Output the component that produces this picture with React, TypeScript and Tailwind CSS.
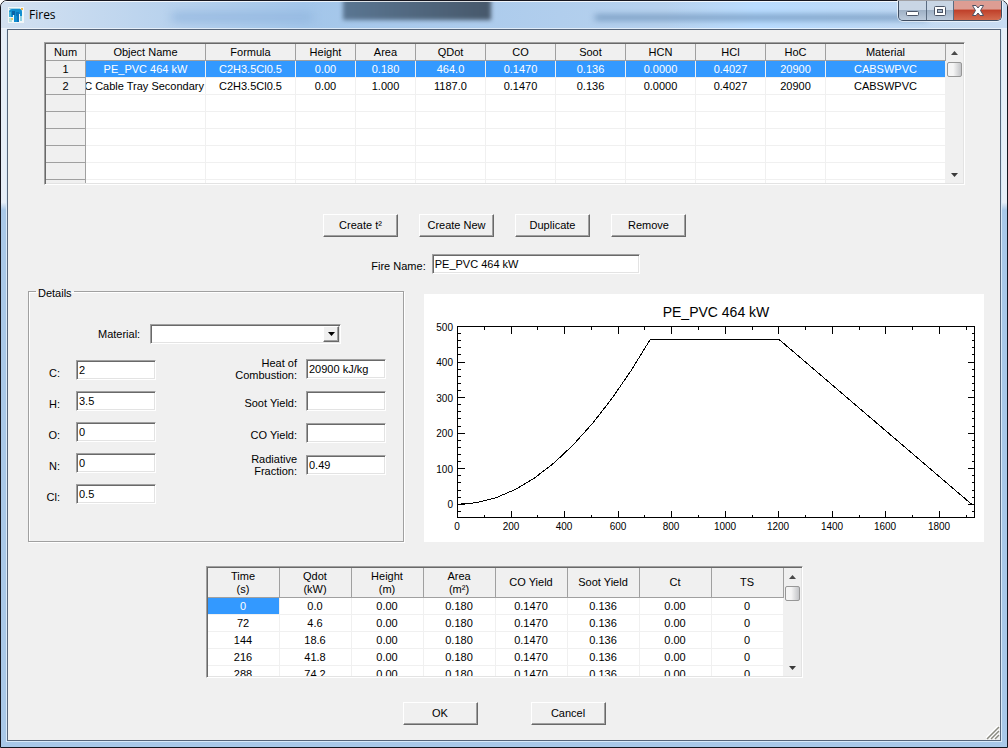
import { useId, useState } from "react";
import type { ReactNode } from "react";

const SUNKEN =
  "border border-t-[#a0a0a0] border-l-[#a0a0a0] border-r-white border-b-white shadow-[inset_1px_1px_0_#696969,inset_-1px_-1px_0_#e3e3e3]";
const RAISED =
  "border border-t-white border-l-white border-r-[#696969] border-b-[#696969] shadow-[inset_-1px_-1px_0_#a0a0a0]";

function PushButton({ children }: { children: ReactNode }) {
  return (
    <button
      type="button"
      className={`flex h-[23px] w-[75px] items-center justify-center whitespace-nowrap bg-[#f0f0f0] ${RAISED}`}
    >
      {children}
    </button>
  );
}

function ScrollBar({ label }: { label: string }) {
  return (
    <div className="flex w-[17px] shrink-0 flex-col items-center bg-[#f0f0f0]">
      <button
        type="button"
        aria-label={`Scroll ${label} up`}
        className="flex h-[17px] w-full items-center justify-center"
      >
        <svg width="7" height="4" viewBox="0 0 7 4" aria-hidden="true">
          <path d="M0 4L3.5 0L7 4Z" fill="#4a4a4a" />
        </svg>
      </button>
      <div className="mt-px h-[15px] w-[15px] rounded-[2px] border border-[#979797] bg-linear-to-r from-[#f5f5f5] from-40% to-[#c3c4c7]" />
      <div className="flex-1" />
      <button
        type="button"
        aria-label={`Scroll ${label} down`}
        className="flex h-[17px] w-full items-center justify-center"
      >
        <svg width="7" height="4" viewBox="0 0 7 4" aria-hidden="true">
          <path d="M0 0L3.5 4L7 0Z" fill="#3a3a3a" />
        </svg>
      </button>
    </div>
  );
}

const fireColumns = [
  { name: "Num", width: 40 },
  { name: "Object Name", width: 120 },
  { name: "Formula", width: 90 },
  { name: "Height", width: 60 },
  { name: "Area", width: 60 },
  { name: "QDot", width: 70 },
  { name: "CO", width: 70 },
  { name: "Soot", width: 70 },
  { name: "HCN", width: 70 },
  { name: "HCl", width: 70 },
  { name: "HoC", width: 60 },
  { name: "Material", width: 120 },
];

const fireRows: string[][] = [
  ["1", "PE_PVC 464 kW", "C2H3.5Cl0.5", "0.00", "0.180", "464.0", "0.1470", "0.136", "0.0000", "0.4027", "20900", "CABSWPVC"],
  ["2", "C Cable Tray Secondary", "C2H3.5Cl0.5", "0.00", "1.000", "1187.0", "0.1470", "0.136", "0.0000", "0.4027", "20900", "CABSWPVC"],
  ...Array.from({ length: 6 }, () => Array.from({ length: 12 }, () => "")),
];

const HEAD_CELL = "border-r border-b border-[#a0a0a0] bg-[#f0f0f0] p-0 font-normal";
const BODY_CELL = "h-[17px] overflow-hidden border-r border-b border-[#f0f0f0] p-0 whitespace-nowrap";

function FireTable() {
  return (
    <div className={`flex h-[143px] overflow-hidden bg-white p-px ${SUNKEN}`}>
      <div className="min-w-0 flex-1 overflow-hidden">
        <table className="w-full table-fixed border-separate border-spacing-0 text-center leading-4">
          <colgroup>
            {fireColumns.map((c) => (
              <col key={c.name} style={{ width: `${c.width / 9}%` }} />
            ))}
          </colgroup>
          <thead>
            <tr>
              {fireColumns.map((c) => (
                <th key={c.name} scope="col" className={`h-[17px] ${HEAD_CELL}`}>
                  {c.name}
                </th>
              ))}
            </tr>
          </thead>
          <tbody>
            {fireRows.map((row, r) => (
              <tr key={r} className={r === 0 ? "bg-[#3399ff] text-white" : "bg-white"}>
                {row.map((cell, c) =>
                  c === 0 ? (
                    <th key={c} scope="row" className={`h-[17px] text-black ${HEAD_CELL}`}>
                      {cell}
                    </th>
                  ) : (
                    <td key={c} className={BODY_CELL}>
                      {cell.length > 20 ? (
                        <div className="flex justify-end overflow-hidden pr-px">
                          <span>{cell}</span>
                        </div>
                      ) : (
                        cell
                      )}
                    </td>
                  ),
                )}
              </tr>
            ))}
          </tbody>
        </table>
      </div>
      <ScrollBar label="fires" />
    </div>
  );
}

const curveColumns: [string, string?][] = [
  ["Time", "(s)"],
  ["Qdot", "(kW)"],
  ["Height", "(m)"],
  ["Area", "(m²)"],
  ["CO Yield"],
  ["Soot Yield"],
  ["Ct"],
  ["TS"],
];

const curveRows = [
  ["0", "0.0"],
  ["72", "4.6"],
  ["144", "18.6"],
  ["216", "41.8"],
  ["288", "74.2"],
].map(([time, qdot]) => [time, qdot, "0.00", "0.180", "0.1470", "0.136", "0.00", "0"]);

function CurveTable() {
  return (
    <div className={`flex h-28 w-[597px] overflow-hidden bg-white p-px ${SUNKEN}`}>
      <div className="min-w-0 flex-1 overflow-hidden">
        <table className="w-full table-fixed border-separate border-spacing-0 text-center leading-4">
          <thead>
            <tr>
              {curveColumns.map(([name, unit]) => (
                <th key={name} scope="col" className={`h-[30px] leading-[13px] ${HEAD_CELL}`}>
                  {name}
                  {unit && (
                    <>
                      <br />
                      {unit}
                    </>
                  )}
                </th>
              ))}
            </tr>
          </thead>
          <tbody>
            {curveRows.map((row, r) => (
              <tr key={r}>
                {row.map((cell, c) => (
                  <td
                    key={c}
                    className={`${BODY_CELL} ${r === 0 && c === 0 ? "bg-[#3399ff] text-white" : ""}`}
                  >
                    {cell}
                  </td>
                ))}
              </tr>
            ))}
          </tbody>
        </table>
      </div>
      <ScrollBar label="time steps" />
    </div>
  );
}

function Field({ label, value }: { label: ReactNode; value: string }) {
  const id = useId();
  const [text, setText] = useState(value);
  return (
    <>
      <label htmlFor={id} className="text-right leading-3">
        {label}
      </label>
      <input
        id={id}
        value={text}
        onChange={(e) => setText(e.target.value)}
        className={`h-5 w-20 rounded-none bg-white pr-1 pb-px pl-[2px] outline-none ${SUNKEN}`}
      />
    </>
  );
}

function Details() {
  return (
    <fieldset className="w-[376px] shrink-0 border border-[#a0a0a0] px-0 shadow-[1px_1px_0_#fff,inset_1px_1px_0_#fff]">
      <legend className="ml-[7px] px-[2px] pt-1 leading-[13px]">Details</legend>
      <div className="mt-6 ml-[69px] flex items-center gap-[10px]">
        <label htmlFor="material">Material:</label>
        <div className="relative">
          <select
            id="material"
            className={`block h-5 w-[191px] appearance-none rounded-none bg-white outline-none ${SUNKEN}`}
          >
            <option value=""></option>
          </select>
          <span
            className={`pointer-events-none absolute top-[2px] right-[2px] flex h-4 w-4 items-center justify-center bg-[#f0f0f0] ${RAISED}`}
          >
            <svg width="7" height="4" viewBox="0 0 7 4" aria-hidden="true">
              <path d="M0 0H7L3.5 4Z" fill="#000" />
            </svg>
          </span>
        </div>
      </div>
      <div className="mt-[15px] flex justify-between pr-[17px] pl-[15px]">
        <div className="grid grid-cols-[16px_80px] items-center gap-x-4 gap-y-[11px] pt-px [&>label]:pt-[5px]">
          <Field label="C:" value="2" />
          <Field label="H:" value="3.5" />
          <Field label="O:" value="0" />
          <Field label="N:" value="0" />
          <Field label="Cl:" value="0.5" />
        </div>
        <div className="grid auto-rows-[20px] grid-cols-[70px_80px] items-center gap-x-[9px] gap-y-3">
          <Field
            label={
              <>
                Heat of
                <br />
                Combustion:
              </>
            }
            value="20900 kJ/kg"
          />
          <Field label={<span className="block pt-1">Soot Yield:</span>} value="" />
          <Field label={<span className="block pt-1">CO Yield:</span>} value="" />
          <Field
            label={
              <>
                Radiative
                <br />
                Fraction:
              </>
            }
            value="0.49"
          />
        </div>
      </div>
    </fieldset>
  );
}

const plot = { left: 33.5, right: 550.5, top: 32.5, bottom: 223.5 };
const px = (t: number) => plot.left + t * 0.2678;
const py = (q: number) => 210.3 - q * 0.3556;
const snap = (v: number) => Math.floor(v) + 0.5;

function HeatReleaseChart() {
  const growth = Array.from({ length: 11 }, (_, i) => {
    const t = i * 72;
    return `${px(t)},${py(464 * (t / 720) ** 2)}`;
  });
  const curve = [...growth, `${px(1200)},${py(464)}`, `${px(1920)},${py(0)}`, `${plot.right},${py(0)}`];
  const xTicks = Array.from({ length: 19 }, (_, i) => (i + 1) * 100);
  const yTicks = Array.from({ length: 26 }, (_, i) => i * 20 - 20);
  const ticks =
    xTicks
      .map((t) => {
        const len = t % 200 === 0 ? 7 : 3;
        return `M${snap(px(t))} ${plot.top}v${len}M${snap(px(t))} ${plot.bottom}v${-len}`;
      })
      .join("") +
    yTicks
      .map((q) => {
        const len = q % 100 === 0 ? 7 : 3;
        return `M${plot.left} ${snap(py(q))}h${len}M${plot.right} ${snap(py(q))}h${-len}`;
      })
      .join("");

  return (
    <svg
      viewBox="0 0 560 248"
      role="img"
      aria-label="PE_PVC 464 kW"
      className="mt-[11px] min-w-0 flex-1 self-start bg-white font-['Liberation_Sans',Arial,sans-serif]"
    >
      <text x="292" y="23" fontSize="14" textAnchor="middle">
        PE_PVC 464 kW
      </text>
      <g fill="none" stroke="#000" shapeRendering="crispEdges">
        <rect x={plot.left} y={plot.top} width={plot.right - plot.left} height={plot.bottom - plot.top} />
        <path d={ticks} />
        <polyline points={curve.join(" ")} />
      </g>
      <g fontSize="10">
        {[0, 100, 200, 300, 400, 500].map((q) => (
          <text key={q} x="29" y={Math.round(py(q)) + 4} textAnchor="end">
            {q}
          </text>
        ))}
        {[0, 200, 400, 600, 800, 1000, 1200, 1400, 1600, 1800].map((t) => (
          <text key={t} x={Math.floor(px(t))} y="236" textAnchor="middle">
            {t}
          </text>
        ))}
      </g>
    </svg>
  );
}

function TitleBar() {
  return (
    <header className="relative flex h-7 justify-between">
      <div className="absolute inset-0 overflow-hidden rounded-t-[6px] bg-linear-to-r from-[#d3e1f1] via-[#a3c6ea] via-30% to-[#c9dcf2]">
        <div className="absolute inset-0 bg-linear-to-r from-transparent from-66% via-[#b9dcff] via-75% to-transparent to-95%" />
        <div className="absolute top-3 left-[17%] h-2 w-[14%] bg-[#93b7df] blur-[5px]" />
        <div className="absolute top-[14px] left-[59%] h-[5px] w-[33%] bg-[#6f94bb] blur-[3px]" />
        <div className="absolute -top-1 left-[34%] h-[23px] w-[148px] bg-linear-to-r from-[#5a7692] to-[#47586b] blur-[2px]" />
        <div className="absolute inset-x-0 top-0 h-px bg-white/80" />
        <div className="absolute inset-x-0 bottom-0 h-px bg-white/60" />
      </div>
      <div className="relative flex items-center gap-[5px] pl-[7px]">
        <svg width="16" height="16" viewBox="0 0 16 16" aria-hidden="true">
          <rect width="16" height="16" fill="#f2f7f8" />
          <path d="M1 5Q1 2 4 2H12Q14 2 14 5V10H12V7H11V15H6V8H5V10H1Z" fill="#128fd0" />
          <path d="M4 4H7V8H4Z" fill="#0b62a4" />
          <path d="M8 5H11V15H9V9H8Z" fill="#0c72b8" />
          <path d="M1 5H3V10H1Z" fill="#45b3d8" />
          <path d="M12 9H14V14H12Z" fill="#8ed0e2" />
          <path d="M1 11H4V15H1Z" fill="#b5dfdc" />
          <path d="M3 11H5V13H3Z" fill="#e3cf72" />
          <rect x="13" y="1" width="2" height="2" fill="#f0b84c" />
          <path d="M1 1H12V2H1Z" fill="#a8d6e6" />
        </svg>
        <h1 className="font-['Open_Sans','Noto_Sans',sans-serif] text-[12px] leading-4">Fires</h1>
      </div>
      <div className="relative mr-[5px] flex h-5 overflow-hidden rounded-b-[5px] border border-t-0 border-[#3f4e63] shadow-[0_0_0_1px_rgba(255,255,255,0.6)]">
        <button
          type="button"
          aria-label="Minimize"
          className="flex w-7 items-center justify-center border-r border-[#5a6b80] bg-linear-to-b from-[#c9d6e5] from-45% via-[#9fb1c6] via-50% to-[#bccbdc]"
        >
          <svg width="13" height="13" viewBox="0 0 13 13" aria-hidden="true">
            <rect x="0.5" y="7.5" width="12" height="4" rx="1" fill="#fff" stroke="#4b5567" />
          </svg>
        </button>
        <button
          type="button"
          aria-label="Maximize"
          className="flex w-[27px] items-center justify-center border-r border-[#5a6b80] bg-linear-to-b from-[#c9d6e5] from-45% via-[#9fb1c6] via-50% to-[#bccbdc]"
        >
          <svg width="12" height="10" viewBox="0 0 12 10" aria-hidden="true">
            <rect x="0.5" y="0.5" width="11" height="9" rx="1" fill="#fff" stroke="#4b5567" />
            <rect x="3.5" y="3.5" width="5" height="3" fill="#a7b8cc" stroke="#4b5567" />
          </svg>
        </button>
        <button
          type="button"
          aria-label="Close"
          className="flex w-[47px] items-center justify-center bg-linear-to-b from-[#dd9d93] from-40% via-[#c0412b] via-50% to-[#d36c50]"
        >
          <svg width="12" height="11" viewBox="0 0 12 11" aria-hidden="true">
            <path
              d="M0.5 0.5H4L6 3L8 0.5H11.5L8.5 5.5L11.5 10.5H8L6 8L4 10.5H0.5L3.5 5.5Z"
              fill="#fff"
              stroke="#4d5062"
            />
          </svg>
        </button>
      </div>
    </header>
  );
}

export default function App() {
  const [name, setName] = useState("PE_PVC 464 kW");
  return (
    <div className="flex min-h-screen flex-col rounded-t-[7px] border border-[#16161f] bg-linear-to-b from-[#e6eef8] from-27% to-[#a9c8e8] to-28% font-['Liberation_Sans',Arial,sans-serif] text-[11px] leading-[13px] text-black">
      <TitleBar />
      <main className="mx-[6px] mb-[6px] flex flex-1 flex-col border border-[#56657a] bg-[#f0f0f0] pt-3 shadow-[0_0_0_1px_#d9e9f8]">
        <div className="mr-[35px] ml-9">
          <FireTable />
        </div>
        <div className="mt-[29px] flex justify-center gap-[21px] pl-px">
          <PushButton>Create t²</PushButton>
          <PushButton>Create New</PushButton>
          <PushButton>Duplicate</PushButton>
          <PushButton>Remove</PushButton>
        </div>
        <div className="mt-[17px] flex justify-center gap-[6px] pl-[3px]">
          <label htmlFor="fire-name" className="pt-[6px]">
            Fire Name:
          </label>
          <input
            id="fire-name"
            value={name}
            onChange={(e) => setName(e.target.value)}
            className={`h-5 w-52 rounded-none bg-white pr-1 pb-px pl-[2px] outline-none ${SUNKEN}`}
          />
        </div>
        <div className="mt-[9px] flex gap-5 pr-4 pl-5">
          <Details />
          <HeatReleaseChart />
        </div>
        <div className="mt-6 flex justify-center">
          <CurveTable />
        </div>
        <div className="mt-6 flex flex-1 items-start justify-center gap-[53px]">
          <PushButton>OK</PushButton>
          <PushButton>Cancel</PushButton>
        </div>
        <svg className="-mt-[14px] self-end" width="14" height="14" viewBox="0 0 14 14" aria-hidden="true">
          <path d="M0 13L13 0M4 13L13 4M8 13L13 8" stroke="#fff" strokeWidth="3" />
          <path d="M1 13L13 1M5 13L13 5M9 13L13 9" stroke="#8a8a80" strokeWidth="1.5" />
        </svg>
      </main>
    </div>
  );
}
